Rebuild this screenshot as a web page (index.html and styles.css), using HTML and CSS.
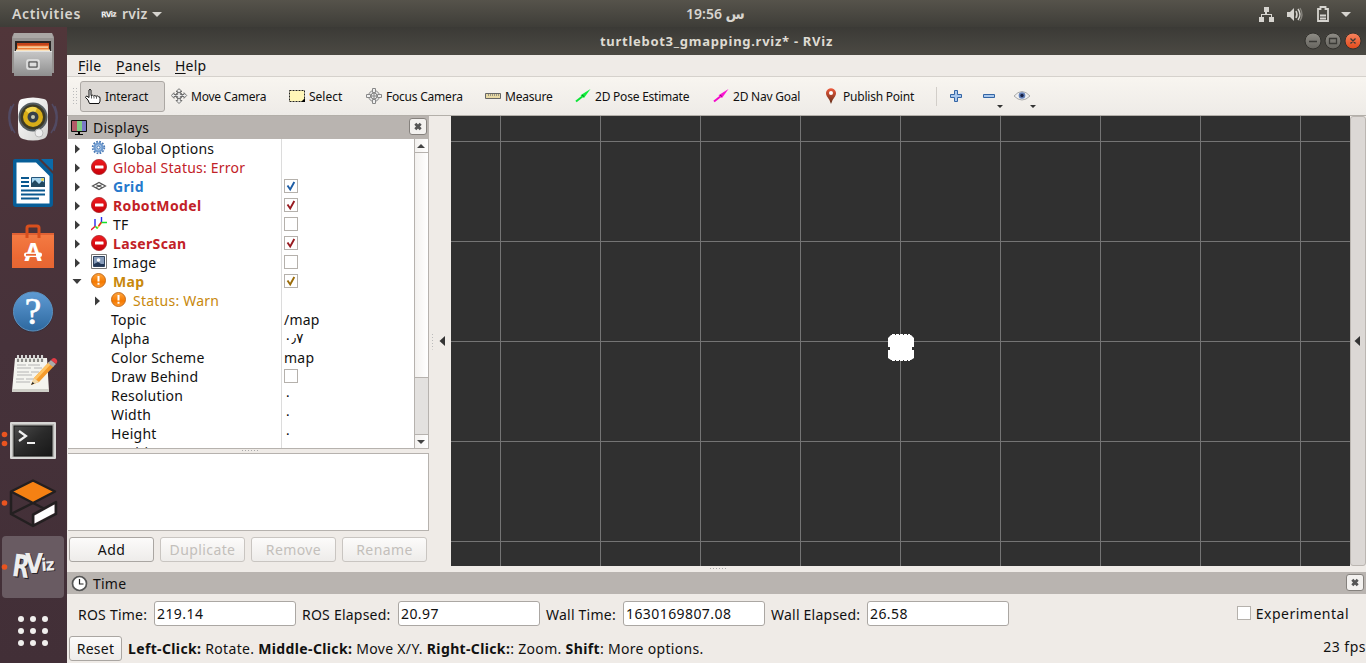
FILE: index.html
```html
<!DOCTYPE html>
<html lang="en">
<head>
<meta charset="utf-8">
<title>turtlebot3_gmapping.rviz* - RViz</title>
<link rel="stylesheet" href="styles.css">
</head>
<body>
<svg class="defs" width="0" height="0">
  <defs>
    <linearGradient id="gRed" x1="0" y1="0" x2="0" y2="1"><stop offset="0" stop-color="#f01c20"/><stop offset="1" stop-color="#c80008"/></linearGradient>
    <linearGradient id="gOr" x1="0" y1="0" x2="0" y2="1"><stop offset="0" stop-color="#ffa640"/><stop offset=".6" stop-color="#f57900"/><stop offset="1" stop-color="#ff9a30"/></linearGradient>
    <linearGradient id="gCab" x1="0" y1="0" x2="0" y2="1"><stop offset="0" stop-color="#c8c8c8"/><stop offset="1" stop-color="#8e8e8e"/></linearGradient>
    <linearGradient id="gBag" x1="0" y1="0" x2="0" y2="1"><stop offset="0" stop-color="#f47c44"/><stop offset="1" stop-color="#e8602c"/></linearGradient>
    <linearGradient id="gHelp" x1="0" y1="0" x2="0" y2="1"><stop offset="0" stop-color="#5f9bd4"/><stop offset="1" stop-color="#2d689f"/></linearGradient>
    <linearGradient id="gTerm" x1="0" y1="0" x2="1" y2="1"><stop offset="0" stop-color="#4b4b4b"/><stop offset=".5" stop-color="#2a2a2a"/><stop offset="1" stop-color="#171717"/></linearGradient>
    <linearGradient id="gPin" x1="0" y1="0" x2="0" y2="1"><stop offset="0" stop-color="#ef5a3c"/><stop offset="1" stop-color="#5f2b16"/></linearGradient>
    <linearGradient id="gSpk" x1="0" y1="0" x2="1" y2="1"><stop offset="0" stop-color="#fff"/><stop offset="1" stop-color="#d2d2d0"/></linearGradient>
    <linearGradient id="gBtn" x1="0" y1="0" x2="0" y2="1"><stop offset="0" stop-color="#8f8d86"/><stop offset="1" stop-color="#66645e"/></linearGradient>
    <linearGradient id="gBtnX" x1="0" y1="0" x2="0" y2="1"><stop offset="0" stop-color="#f7845f"/><stop offset="1" stop-color="#e2491a"/></linearGradient>
    <symbol id="error" viewBox="0 0 17 17"><circle cx="8" cy="8" r="7.600" fill="url(#gRed)" stroke="#a8272b" stroke-width=".8"/><rect x="4" y="6.500" width="8.500" height="3" rx=".5" fill="#fff"/></symbol>
    <symbol id="warn" viewBox="0 0 17 17"><circle cx="7.500" cy="7.500" r="7" fill="url(#gOr)" stroke="#bd6414" stroke-width=".9"/><path d="M6.500 3h2v5.500h-2zM6.500 9.700h2v2h-2z" fill="#fff"/></symbol>
    <symbol id="arrow" viewBox="0 0 7 10"><path d="M1 .5 6 5 1 9.500z" fill="#3c3c3c"/></symbol>
    <symbol id="tick" viewBox="1 1 12 12"><path d="M3.500 6.500 6.200 10.500 10.300 3" fill="none" stroke="currentColor" stroke-width="1.900"/></symbol>
    <symbol id="close" viewBox="0 0 16 15"><path d="M5.300 4.800l5.400 5.400M10.700 4.800l-5.400 5.400" stroke="#555" stroke-width="2.800"/></symbol>
  </defs>
</svg>

<header class="topbar">
  <span class="activities">Activities</span>
  <svg class="rviz-mini" width="17" height="12"><text x="0" y="9" transform="rotate(-3 8 6)">RViz</text></svg>
  <span class="appname">rviz</span>
  <svg class="caret" width="10" height="6"><path d="M0 0h10L5 5z"/></svg>
  <span class="clock">19:56 <span class="arabic">س</span></span>
  <svg class="tray" width="96" height="18" viewBox="1256 4 96 18">
    <g fill="#d6d4cf"><path d="M1264 6h5v5h-2v2h5v3h2v5h-5v-5h2v-2h-9v2h2v5h-5v-5h2v-3h4v-2h-1z"/>
    <path d="M1287 11h3l4-4v13l-4-4h-3z"/></g>
    <path d="M1296 10q2 3.500 0 7M1298 8q4 5.500 0 11" fill="none" stroke="#d6d4cf" stroke-width="1.500"/>
    <path d="M1300 7q4 6.500 0 13" fill="none" stroke="#85837c" stroke-width="1.300"/>
    <path d="M1318 8h2.500V6h5v2h2.500v12h-10zM1320 14.500h6M1320 17.500h6" fill="none" stroke="#d6d4cf" stroke-width="1.800"/>
    <path d="M1341 11h10l-5 5z" fill="#d6d4cf"/>
  </svg>
</header>

<div class="desktop">
<nav class="dock">
  <svg viewBox="0 0 67 64"><path d="M14 10h38l2 4v36H12V14z" fill="#969391"/><path d="M14 10h38l1 5H13z" fill="#aaa7a5"/><path d="M15 18h36v11H15z" fill="#292524"/><path d="M17 20h32v8H17z" fill="#c4431a"/><path d="M17 22.500h32v5H17z" fill="#ef7d35"/><path d="M18 23.500h30v1.200H18zM16 26.500h34V28H16z" fill="#fae3bd"/><path d="M14 28h38v25H14z" fill="url(#gCab)"/><path d="M14 28h38v1H14z" fill="#e2e2e2"/><rect x="27" y="37" width="12" height="9" rx="1.500" fill="#b5b5b5" stroke="#e5e5e5" stroke-width="1.500"/><path d="M29 39h8v5h-8z" fill="#ddd" stroke="#444"/></svg>
  <svg viewBox="0 0 67 64"><path d="M14 17q-9 14 1 29M11 19q-5 12 1 25M52 17q9 14-1 29M55 19q5 12-1 25" fill="none" stroke="#56608c" stroke-width="1.500" opacity=".5"/><path d="M22 12q11-3 22 0 4 0 4 10v20q0 9-5 10-10 3-20 0-5-1-5-10V22q0-10 4-10z" fill="url(#gSpk)"/><circle cx="33" cy="30" r="14.500" fill="#555d61"/><circle cx="33" cy="30" r="12.500" fill="#3d3a25"/><circle cx="33" cy="30" r="10" fill="#d9ae18"/><path d="M25 23a10 10 0 0 1 12-2l-4 9z" fill="#f3d550"/><circle cx="33" cy="30" r="5.500" fill="#37404a"/><circle cx="33" cy="30" r="2" fill="#c9c9b0"/><circle cx="39" cy="46" r="4" fill="#eee" stroke="#bbb"/></svg>
  <svg viewBox="0 0 67 64"><path d="M15 8h23l15 15v30q0 3-3 3H16q-3 0-3-3V10q0-2 2-2z" fill="#075e98"/><path d="M41 8h12v12z" fill="#0b6ba9"/><path d="M16.500 11.500H36L49.500 25v27.500h-33z" fill="#fff"/><path d="M21 27h8M21 31h8M21 35h8M21 39.500h24M21 43.500h24M21 47.500h18" stroke="#0b598f" stroke-width="2"/><path d="M31.500 26.500h13v9h-13z" fill="#a9d6ef" stroke="#25557b"/><path d="M31 36v-3l4-4 4 4 3-3 3 2v4z" fill="#22485f"/><circle cx="42.500" cy="28.500" r="1.500" fill="#efd54a"/></svg>
  <svg viewBox="0 0 67 64"><path d="M12 18h42v35H12z" fill="url(#gBag)"/><path d="M12 18h42v2H12z" fill="#df6134"/><path d="M27 23V13q0-2 2-2h8q2 0 2 2v10" fill="none" stroke="#d84f1d" stroke-width="3"/><path d="M12 44h42v9H12z" fill="#e56c38" opacity=".5"/><text class="bag-a" x="33" y="46" text-anchor="middle">A</text><rect x="24" y="37.500" width="18" height="4.500" rx="2" fill="#fff"/><path d="M26 39.800h10" stroke="#e86430" stroke-width="1.800"/></svg>
  <svg viewBox="0 0 67 64"><circle cx="33" cy="33.500" r="20" fill="#2a2a3d" opacity=".4"/><circle cx="33" cy="32.500" r="19.500" fill="url(#gHelp)" stroke="#5b91bf"/><text class="help-q" x="33" y="45" text-anchor="middle">?</text></svg>
  <svg viewBox="0 -4 67 64"><g transform="translate(0 -7)"><path d="M15 18h32l2 33H12z" fill="#f4f4ef"/><path d="M12 49h37v3H12z" fill="#cfcfc8"/><path d="M18 15v7M22 15v7M26 15v7M30 15v7M34 15v7M38 15v7M42 15v7" stroke="#8a8a86" stroke-width="2.200"/><path d="M18 15v4M22 15v4M26 15v4M30 15v4M34 15v4M38 15v4M42 15v4" stroke="#eee" stroke-width="1.500"/><path d="M17 25h9m2 0h12M17 28h14m3 0h8M17 32h12m2 0h8M17 35h15M16 39h8m2 0h9M16 42h14" stroke="#b4b4b4" stroke-width="1"/><path d="M31 45l3-7 15-16 5 4-15 16z" fill="#f49b2c"/><path d="M34 38 49 22l2 2-15 16z" fill="#ffc465"/><path d="M31 45l3-7 5 4z" fill="#f0d9ac"/><path d="M31 45l1.500-3 2 1.500z" fill="#222"/><path d="M48 23l3-3 5 4-3 3z" fill="#aaa"/><path d="M51 20q3-4 6 0 1 2-1 4z" fill="#e23b45"/></g></svg>
  <svg viewBox="0 0 67 64"><circle cx="4.500" cy="27.500" r="2.800" fill="#e95420"/><circle cx="4.500" cy="36.500" r="2.800" fill="#e95420"/><rect x="10" y="15" width="46" height="37" rx="1" fill="#d7d7d5"/><rect x="12" y="17" width="42" height="33" fill="#b2b2af"/><rect x="14" y="19" width="38" height="30" fill="url(#gTerm)" stroke="#161616"/><path d="M19 24l7 5-7 5M27 36h8" fill="none" stroke="#f1f1f1" stroke-width="2.200"/></svg>
  <svg viewBox="0 0 67 64"><circle cx="4.500" cy="32" r="2.800" fill="#e95420"/><g fill="none" stroke="#231f20" stroke-width="2.500" stroke-linejoin="round"><path d="M11 21v22L33 55l23-12V31L33 43.500V54M11 43 33 32 45 38"/><path d="M33 9.500 55 20.500 33 32 11 20.500z" fill="#f58113"/></g><path d="M34.500 44.500 54.500 33.500v8.500l-20 10.500z" fill="#fff"/></svg>
  <svg viewBox="0 0 67 64"><rect x="2" y="1" width="62" height="62" rx="4" fill="#695b62"/><circle cx="4.500" cy="32" r="2.800" fill="#e95420"/><g class="rviz-logo" fill="#29242b"><text class="l1" x="14" y="43" textLength="17" lengthAdjust="spacingAndGlyphs" transform="rotate(8 20 32)">R</text><text class="l2" x="26" y="39">V</text><text class="l3" x="42.500" y="36.500" transform="rotate(-4 48 32)">iz</text></g><g class="rviz-logo" fill="#ededed"><text class="l1" x="12.500" y="42" textLength="17" lengthAdjust="spacingAndGlyphs" transform="rotate(8 20 32)">R</text><text class="l2" x="25" y="38">V</text><text class="l3" x="41.500" y="35.500" transform="rotate(-4 48 32)">iz</text></g></svg>
  <svg viewBox="0 0 67 64"><g fill="#f0efed"><circle cx="21" cy="20" r="3"/><circle cx="33" cy="20" r="3"/><circle cx="45" cy="20" r="3"/><circle cx="21" cy="32" r="3"/><circle cx="33" cy="32" r="3"/><circle cx="45" cy="32" r="3"/><circle cx="21" cy="44" r="3"/><circle cx="33" cy="44" r="3"/><circle cx="45" cy="44" r="3"/></g></svg>
</nav>

<main class="window">
  <div class="titlebar"><span class="title">turtlebot3_gmapping.rviz* - RViz</span>
    <svg class="winbtns" width="58" height="18" viewBox="1304 32 58 18"><g stroke="#33322e"><circle cx="1313" cy="41" r="8" fill="url(#gBtn)"/><circle cx="1333" cy="41" r="8" fill="url(#gBtn)"/><circle cx="1353" cy="41" r="8" fill="url(#gBtnX)"/></g><path d="M1309 41.500h8M1329.500 38.500h7v5h-7zM1350.500 38.500l5 5M1355.500 38.500l-5 5" fill="none" stroke="#3b3a36" stroke-width="1.300"/></svg>
  </div>
  <div class="menubar"><span class="m1"><u>F</u>ile</span><span class="m2"><u>P</u>anels</span><span class="m3"><u>H</u>elp</span></div>
  <div class="toolbar">
    <i class="grip-v"></i>
    <div class="tool t1"><svg width="17" height="17"><path d="M4.500 15.500 3 12 .5 9.500 1.500 8 4 9.500V2q1-1.500 2 0v5.500q1.500-1 2.500.5 1.500-1 2.500.3 1.500-1 2.500.4 1.500-.3 1.500 1.500v3l-1 2.300z" fill="#fff" stroke="#111"/><path d="M6.500 8v2.500M9 8.500v2M11.500 8.700v2" stroke="#333" stroke-width=".8"/></svg><span>Interact</span></div>
    <div class="tool t2"><svg width="17" height="17"><g fill="#eee" stroke="#666" stroke-width=".9"><path d="M8 .7 11 3.500H9.300V6.500H13V4.700L15.700 7.500 13 10.300V8.500H9.300v4H11L8 15.500 5 12.500h1.700v-4H3v1.800L.3 7.500 3 4.700v1.800h3.700v-3H5z"/><circle cx="8" cy="7.500" r="3.200" fill="none"/></g></svg><span>Move Camera</span></div>
    <div class="tool t3"><svg width="17" height="17"><path d="M.5 2.500h15v11H.5z" fill="#fff6b8" stroke="#222" stroke-dasharray="2 1"/><path d="M16 10v4h-4z"/></svg><span>Select</span></div>
    <div class="tool t4"><svg width="17" height="17"><g fill="none" stroke="#888" stroke-width="1"><circle cx="8" cy="8" r="5.500" fill="#e9e9e9"/><circle cx="8" cy="8" r="3"/><path d="M6.500.5h3v4h-3zM6.500 11.500h3v4h-3zM.5 6.500h4v3h-4zM11.500 6.500h4v3h-4z" fill="#f0f0f0"/><path d="M8 4v8M4 8h8"/></g></svg><span>Focus Camera</span></div>
    <div class="tool t5"><svg width="17" height="17"><path d="M.5 5.500h15v5H.5z" fill="#e8d9a4" stroke="#666"/><path d="M3.500 6v2M5.500 6v2M7.500 6v2M9.500 6v2M11.500 6v2M13.500 6v2" stroke="#777" stroke-width=".7"/></svg><span>Measure</span></div>
    <div class="tool t6"><svg width="17" height="17"><path d="M1 13.500 8 8" stroke="#0be337" stroke-width="2"/><path d="M5.500 7.300 15.500 1 9 10z" fill="#10ee3b"/><path d="M7 7l2 1.500" stroke="#087b22"/></svg><span>2D Pose Estimate</span></div>
    <div class="tool t7"><svg width="17" height="17"><path d="M1 13.500 8 8" stroke="#f307c9" stroke-width="2"/><path d="M5.500 7.300 15.500 1 9 10z" fill="#fa16d2"/><path d="M7 7l2 1.500" stroke="#8b087b"/></svg><span>2D Nav Goal</span></div>
    <div class="tool t8"><svg width="17" height="17"><path d="M8 16Q7 12 4 8.500 1.500 4 5 1.300 8-.8 11 1.300 14.500 4 12 8.500 9 12 8 16z" fill="url(#gPin)"/><circle cx="8" cy="5" r="2" fill="#fff"/></svg><span>Publish Point</span></div>
    <i class="sep"></i>
    <svg class="extras" width="90" height="24" viewBox="948 86 90 24"><path d="M954.500 90.500h3v4h4v3h-4v4h-3v-4h-4v-3h4zM983.500 94.500h11v3h-11z" fill="#a9c7ec" stroke="#3465a4"/><path d="M997 105h6l-3 3zM1030 105h6l-3 3z" fill="#333"/><path d="M1014 96q8-9 16 0-8 8-16 0z" fill="#f0f0f0" stroke="#aaa"/><circle cx="1022" cy="95.500" r="3.300" fill="#6380b8"/><circle cx="1022" cy="95.500" r="1.700" fill="#172044"/></svg>
  </div>

  <div class="work">
    <section class="displays">
      <div class="dockhead"><svg width="17" height="17"><path d="M.5 1.500h15v11H.5z" fill="#7fce83" stroke="#111"/><path d="M1 2h5v10H1z" fill="#b25c68"/><path d="M11 2h4v10h-4z" fill="#7978c7"/><path d="M7 13h2v2h3v1H4v-1h3z"/></svg><span class="dtitle">Displays</span><svg class="xbtn"><use href="#close"/></svg></div>
      <div class="treewrap">
        <div class="tree">
          <div class="row"><svg class="exp"><use href="#arrow"/></svg><svg class="ico" viewBox="0 0 17 17"><circle cx="7.500" cy="7.500" r="4" fill="#a8c5e6" stroke="#6f9bd0" stroke-width="2.200"/><circle cx="7.500" cy="7.500" r="5.800" fill="none" stroke="#4a7ab5" stroke-width="1.800" stroke-dasharray="1.700 1.340"/><circle cx="7.500" cy="7.500" r="1.500" fill="#fff" stroke="#4a7ab5"/></svg><span class="n">Global Options</span></div>
          <div class="row"><svg class="exp"><use href="#arrow"/></svg><svg class="ico"><use href="#error"/></svg><span class="n red">Global Status: Error</span></div>
          <div class="row"><svg class="exp"><use href="#arrow"/></svg><svg class="ico" viewBox="0 0 17 17"><path d="M1.500 8 8 4.500 14.500 8 8 11.500zM4.500 6.200l7 3.600M11.500 6.200l-7 3.600" fill="none" stroke="#555" stroke-width="1.200"/></svg><b class="n blue">Grid</b><svg class="cb blue2"><use href="#tick"/></svg></div>
          <div class="row"><svg class="exp"><use href="#arrow"/></svg><svg class="ico"><use href="#error"/></svg><b class="n red">RobotModel</b><svg class="cb red2"><use href="#tick"/></svg></div>
          <div class="row"><svg class="exp"><use href="#arrow"/></svg><svg class="ico" viewBox="0 0 17 17"><path d="M6 12.500 11 6" stroke="#e8d832" stroke-width="1.500"/><path d="M4 3v7M10.500 1v5" stroke="#2929ee" stroke-width="1.400"/><path d="M0 14l4.500-4M7.500 10l3-4" stroke="#e62030" stroke-width="1.400"/><path d="M4.500 10.500l2 2M10.500 6.500H16" stroke="#14df28" stroke-width="1.500"/></svg><span class="n">TF</span><svg class="cb"></svg></div>
          <div class="row"><svg class="exp"><use href="#arrow"/></svg><svg class="ico"><use href="#error"/></svg><b class="n red">LaserScan</b><svg class="cb red2"><use href="#tick"/></svg></div>
          <div class="row"><svg class="exp"><use href="#arrow"/></svg><svg class="ico" viewBox="0 0 17 17"><path d="M.5.5h15v14H.5z" fill="#fff" stroke="#777"/><path d="M2.500 2.500h11v10h-11z" fill="#879cba" stroke="#31445f"/><path d="M3 10l4-2 3 2h3v2H3z" fill="#243856"/><circle cx="7.500" cy="6" r="1.800" fill="#fff"/></svg><span class="n">Image</span><svg class="cb"></svg></div>
          <div class="row"><svg class="exp open" viewBox="0 0 10 7"><path d="M.5 1h9L5 6z" fill="#3c3c3c"/></svg><svg class="ico"><use href="#warn"/></svg><b class="n gold">Map</b><svg class="cb gold2"><use href="#tick"/></svg></div>
          <div class="row sub"><svg class="exp"><use href="#arrow"/></svg><svg class="ico"><use href="#warn"/></svg><span class="n gold">Status: Warn</span></div>
          <div class="row prop"><span class="n">Topic</span><span class="v">/map</span></div>
          <div class="row prop"><span class="n">Alpha</span><span class="v arabic">٠٫٧</span></div>
          <div class="row prop"><span class="n">Color Scheme</span><span class="v">map</span></div>
          <div class="row prop"><span class="n">Draw Behind</span><svg class="cb"></svg></div>
          <div class="row prop"><span class="n">Resolution</span><span class="v arabic">٠</span></div>
          <div class="row prop"><span class="n">Width</span><span class="v arabic">٠</span></div>
          <div class="row prop"><span class="n">Height</span><span class="v arabic">٠</span></div>
          <div class="row prop"><span class="n">Position</span></div>
        </div>
        <div class="scroll"><svg class="up" width="13" height="13"><path d="M2 9h8L6 5z" fill="#444"/></svg><i class="thumb"></i><i class="trough"></i><svg class="down" width="13" height="13"><path d="M2 5h8L6 9z" fill="#444"/></svg></div>
      </div>
      <i class="grip-h"></i>
      <div class="desc"></div>
      <div class="buttons"><span class="btn">Add</span><span class="btn off">Duplicate</span><span class="btn off">Remove</span><span class="btn off">Rename</span></div>
    </section>
    <div class="hsplit"><i class="grip-v small"></i><svg width="7" height="10"><path d="M6 0v10L.5 5z" fill="#333"/></svg></div>
    <div class="view"><svg width="899" height="450"><path d="M49.500 0v450M149.500 0v450M249.500 0v450M349.500 0v450M449.500 0v450M549.500 0v450M649.500 0v450M749.500 0v450M849.500 0v450M0 25.500h899M0 125.500h899M0 225.500h899M0 325.500h899M0 425.500h899" stroke="#747474"/><path d="M441 218.500h18M441 244.500h18" stroke="#fff" stroke-width="1" stroke-dasharray="3 1"/><path d="M440 219h20l3 3v9h-2v3h2v8l-3 2h-20l-3-2v-8h2v-3h-2v-9z" fill="#fff"/></svg></div>
    <div class="rightbar"><svg width="7" height="10"><path d="M6 0v10L.5 5z" fill="#333"/></svg></div>
  </div>
  <i class="grip-h low"></i>
  <div class="dockhead timehead"><svg width="17" height="17"><circle cx="8.500" cy="8.500" r="7" fill="#fff" stroke="#555" stroke-width="1.700"/><path d="M8.500 4v5h4" fill="none" stroke="#222" stroke-width="1.200"/></svg><span class="ttitle">Time</span><svg class="xbtn"><use href="#close"/></svg></div>
  <div class="times">
    <label class="l-rt">ROS Time:</label><span class="field">219.14</span>
    <label class="l-re">ROS Elapsed:</label><span class="field">20.97</span>
    <label class="l-wt">Wall Time:</label><span class="field">1630169807.08</span>
    <label class="l-we">Wall Elapsed:</label><span class="field">26.58</span>
    <span class="exper"><i class="cb"></i><span>Experimental</span></span>
  </div>
  <footer class="status"><span class="btn reset">Reset</span><span class="hint"><b>Left-Click:</b> Rotate. <b>Middle-Click:</b> Move X/Y. <b>Right-Click:</b>: Zoom. <b>Shift</b>: More options.</span><span class="fps">23 fps</span></footer>
</main>
</div>
</body>
</html>
```
FILE: styles.css
```css
* { box-sizing: border-box; }
body { margin: 0; width: 1366px; height: 663px; overflow: hidden; background: #efebe7; color: #111; font: 14px/19px "Noto Sans", "DejaVu Sans", sans-serif; letter-spacing: .23px; white-space: nowrap; }
svg { display: block; flex: none; }
i { display: block; flex: none; }
.defs { position: absolute; }
.arabic { font-family: "DejaVu Sans", sans-serif; }
.topbar { position: relative; height: 27px; display: flex; align-items: center; padding-left: 12px; background: linear-gradient(#56534b, #3e3d38); color: #d8d5cf; font-weight: 600; }
.activities { width: 89px; letter-spacing: .65px; }
.rviz-mini { width: 21px; }
.rviz-mini text { font: bold 8px "DejaVu Sans Condensed", sans-serif; fill: #eee; letter-spacing: -.7px; }
.appname { width: 30px; }
.caret { fill: #d6d4cf; margin-top: 2px; }
.clock { margin-left: 524px; width: 60px; letter-spacing: -.3px; }
.tray { margin-left: auto; margin-right: 14px; }
.desktop { display: flex; height: 636px; }
.dock { width: 67px; background: linear-gradient(#51363a, #46323a 50%, #422f37); display: flex; flex-direction: column; letter-spacing: 0; }
.dock svg { width: 67px; height: 64px; overflow: visible; }
.dock svg:first-child { margin-top: -4px; }
.bag-a { font: bold 25px "Open Sans", sans-serif; fill: #fff; }
.help-q { font: 37px "Liberation Serif", serif; fill: #fff; stroke: #fff; stroke-width: .7px; }
.rviz-logo text { font-family: "DejaVu Sans Condensed", sans-serif; font-weight: bold; }
.rviz-logo .l1 { font-size: 31px; }
.rviz-logo .l2 { font-size: 26px; }
.rviz-logo .l3 { font-size: 17px; letter-spacing: -1px; }
.window { width: 1299px; display: flex; flex-direction: column; background: #efebe7; }
.titlebar { height: 28px; display: flex; align-items: center; justify-content: center; position: relative; background: linear-gradient(#3b3a36, #4b4943); color: #dfdbd2; font-weight: bold; font-size: 13px; letter-spacing: .72px; }
.winbtns { position: absolute; right: 4px; top: 5px; }
.menubar { height: 22px; display: flex; padding-left: 11px; line-height: 21px; border-bottom: 1px solid #d5d1cc; }
.menubar u { text-underline-offset: 2px; }
.m1 { width: 38px; }
.m2 { width: 59px; }
.toolbar { height: 39px; display: flex; align-items: center; background: linear-gradient(#f8f5f0, #eeebe7); border-bottom: 1px solid #b3afa9; font-size: 12px; letter-spacing: -.22px; }
.grip-v { width: 8px; height: 18px; margin-left: 5px; background: radial-gradient(circle, #bbb 0 .7px, transparent 1px) 0 0 / 3px 3px; clip-path: inset(0 3px 0 0); }
.tool { height: 31px; display: flex; align-items: center; padding-left: 5px; }
.tool svg { margin-right: 3px; }
.t1 { width: 85px; margin-right: 1px; background: #dcd8d4; border: 1px solid #aca8a4; border-radius: 3px; padding-left: 4px; letter-spacing: -.1px; }
.t2 { width: 118px; } .t3 { width: 77px; } .t4 { width: 119px; } .t5 { width: 90px; } .t6 { width: 138px; } .t7 { width: 110px; } .t8 { width: 118px; }
.t2, .t4 { padding-left: 5px; }
.t3 { letter-spacing: 0; }
.sep { width: 1px; height: 19px; background: #d2cec9; margin-right: 11px; }
.extras { margin-top: 4px; }
.work { height: 450px; display: flex; }
.displays { width: 362px; padding-left: 1px; display: flex; flex-direction: column; }
.dockhead { height: 23px; display: flex; align-items: center; padding: 0 2px 0 3px; background: #b9b4b0; flex: none; }
.dockhead > span { margin-left: 5px; }
.xbtn { margin-left: auto; margin-top: -2px; background: #f3f1ef; border: 1px solid #85817d; border-radius: 3px; width: 18px; height: 17px; }
.treewrap { height: 310px; display: flex; background: #fff; border-right: 1px solid #b6b2ae; border-bottom: 1px solid #b6b2ae; }
.tree { width: 346px; height: 309px; overflow: hidden; background: linear-gradient(90deg, transparent 213px, #dcdcdc 213px 214px, transparent 214px); }
.row { height: 19px; display: flex; align-items: center; }
.exp { width: 7px; height: 10px; margin: 0 10px 0 6px; }
.exp.open { width: 10px; height: 7px; margin: 0 9px 0 4px; }
.ico { width: 17px; height: 17px; margin-right: 5px; }
.row .n { width: 171px; flex: none; line-height: 19px; }
.row b.n { letter-spacing: .35px; }
.sub .exp { margin-left: 26px; }
.sub .n { width: auto; }
.prop .n { width: 173px; margin-left: 43px; }
.cb { width: 14px; height: 14px; border: 1px solid #b5b1ac; background: #fff; }
.tree .cb { margin-top: -2px; padding: 0; }
.red { color: #c22127; } .blue { color: #2679cc; } .gold { color: #c8880c; }
.red2 { color: #981a20; } .blue2 { color: #1d5da5; } .gold2 { color: #9b6b08; }
.scroll { width: 14px; height: 309px; border-left: 1px solid #b6b2ae; background: linear-gradient(90deg, #f3f1ef, #fff); }
.thumb { height: 226px; border-top: 1px solid #b6b2ae; border-bottom: 1px solid #b6b2ae; }
.trough { height: 57px; background: #e3e1df; border-bottom: 1px solid #b6b2ae; }
.grip-h { width: 17px; height: 4px; margin-left: 173px; background: radial-gradient(circle, #aaa 0 .7px, transparent 1px) 0 0 / 3px 3px; clip-path: inset(0 0 1px 0); }
.desc { height: 78px; flex: none; background: #fff; border: 1px solid #b6b2ae; border-left: 0; }
.buttons { display: flex; gap: 6px; padding: 6px 1px; letter-spacing: .4px; }
.btn { width: 85px; height: 25px; border: 1px solid #aaa6a2; border-radius: 3px; background: linear-gradient(#fcfbfa, #eeecea); text-align: center; line-height: 24px; flex: none; }
.off { color: #c3bfbb; border-color: #c9c5c1; }
.hsplit { width: 22px; display: flex; align-items: center; }
.hsplit .grip-v { height: 17px; width: 4px; margin: 0 6px 0 2px; clip-path: inset(0 1px 0 0); }
.hsplit svg { margin-left: -2px; }
.view { width: 899px; background: #303030; }
.rightbar { width: 16px; display: flex; align-items: center; padding-left: 3px; background: #dcd8d5; border: 1px solid #bbb6b1; border-radius: 3px; }
.grip-h.low { height: 6px; margin-left: 642px; background-position: 0 1px; clip-path: inset(0 0 2px 0); }
.timehead { height: 22px; padding-left: 4px; }
.times { height: 42px; display: flex; align-items: center; padding: 0 17px 3px 11px; }
.times label { margin-top: 2px; flex: none; }
.l-rt { width: 76px; } .l-re { width: 96px; } .l-wt { width: 77px; } .l-we { width: 96px; }
.field { width: 142px; height: 25px; margin-right: 6px; border: 1px solid #aba7a3; border-radius: 3px; background: #fff; padding-left: 2px; line-height: 23px; letter-spacing: .42px; flex: none; }
.exper { display: flex; align-items: center; gap: 5px; margin-left: auto; letter-spacing: .5px; }
.exper .cb { margin-top: -1px; }
.status { height: 27px; display: flex; align-items: center; padding: 0 0 2px 2px; }
.reset { width: 53px; margin-right: 6px; }
.hint { letter-spacing: .32px; }
.hint b { letter-spacing: .36px; }
.fps { margin-left: auto; margin-top: -5px; letter-spacing: .5px; }
```
